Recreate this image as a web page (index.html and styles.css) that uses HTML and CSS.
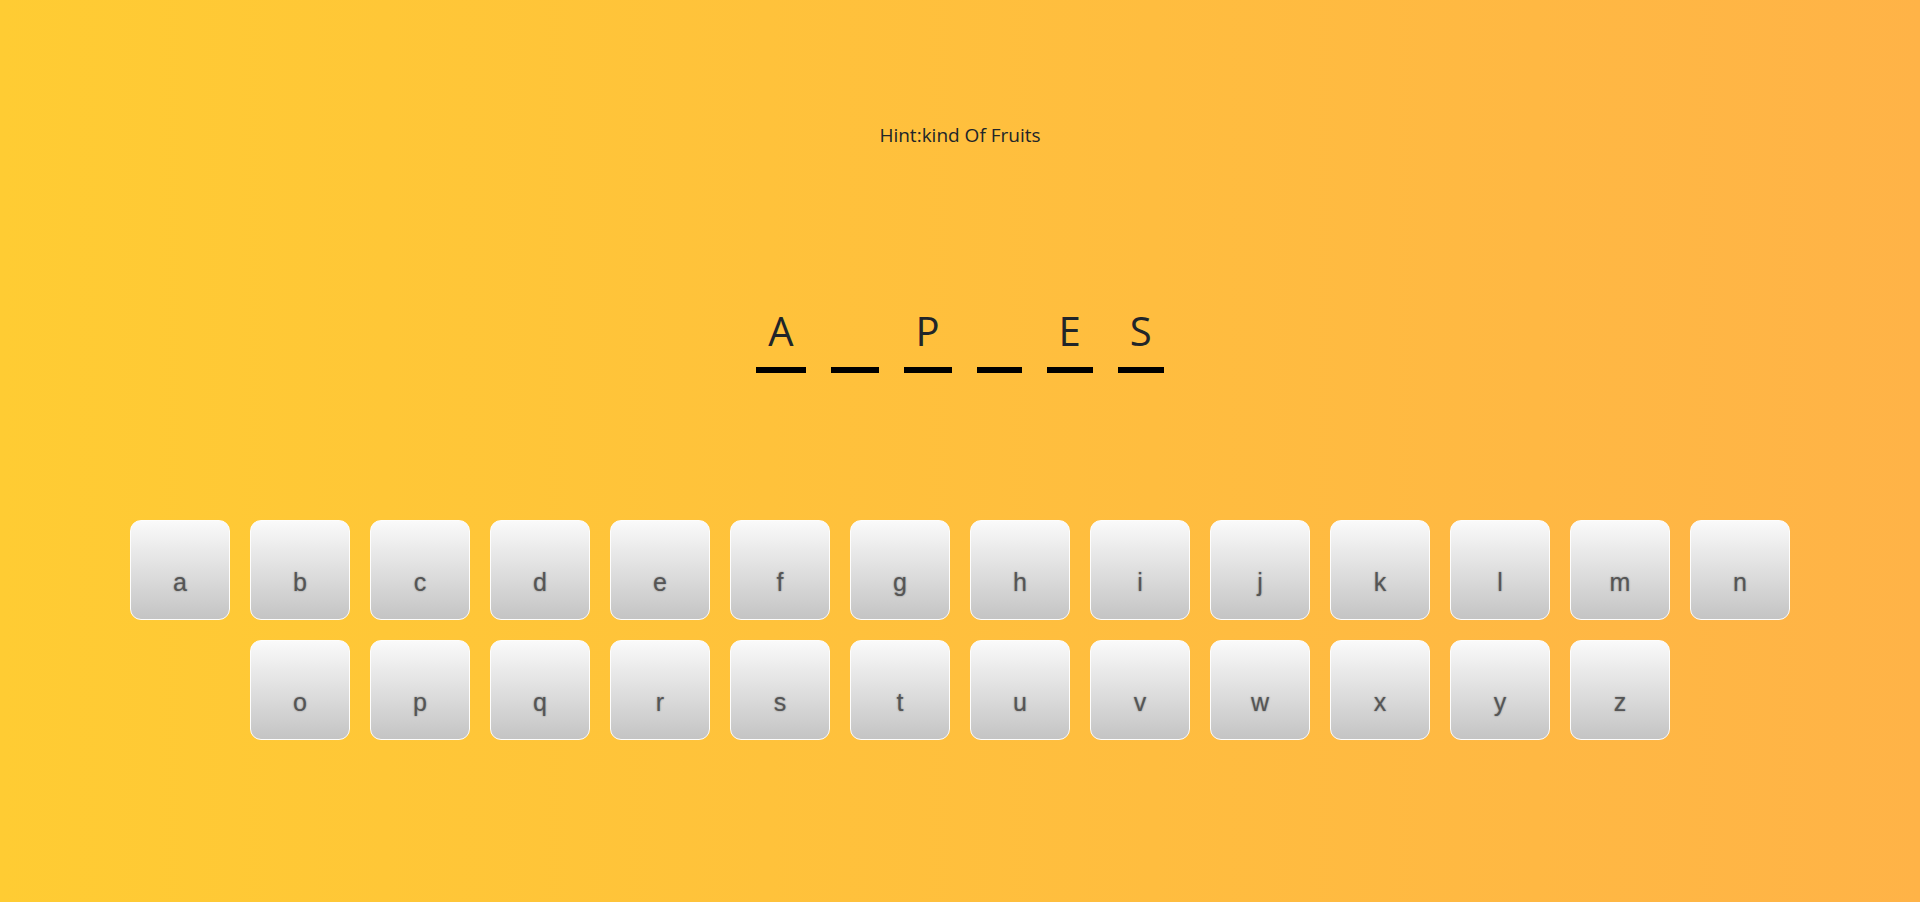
FILE: index.html
```html
<!DOCTYPE html>
<html lang="en">
<head>
<meta charset="utf-8">
<title>Hangman</title>
<link rel="stylesheet" href="styles.css">
</head>
<body>
<main class="game">
  <p class="hint">Hint:kind Of Fruits</p>
  <div class="word">
    <span class="slot">A</span>
    <span class="slot blank">P</span>
    <span class="slot">P</span>
    <span class="slot blank">L</span>
    <span class="slot">E</span>
    <span class="slot">S</span>
  </div>
  <div class="keyboard">
    <button class="key">a</button>
    <button class="key">b</button>
    <button class="key">c</button>
    <button class="key">d</button>
    <button class="key">e</button>
    <button class="key">f</button>
    <button class="key">g</button>
    <button class="key">h</button>
    <button class="key">i</button>
    <button class="key">j</button>
    <button class="key">k</button>
    <button class="key">l</button>
    <button class="key">m</button>
    <button class="key">n</button>
    <button class="key">o</button>
    <button class="key">p</button>
    <button class="key">q</button>
    <button class="key">r</button>
    <button class="key">s</button>
    <button class="key">t</button>
    <button class="key">u</button>
    <button class="key">v</button>
    <button class="key">w</button>
    <button class="key">x</button>
    <button class="key">y</button>
    <button class="key">z</button>
  </div>
</main>
</body>
</html>
```
FILE: styles.css
```css
html, body {
  margin: 0;
  padding: 0;
  height: 100%;
}

body {
  min-height: 100vh;
  background: linear-gradient(to right, #ffcc33, #ffb347);
  font-family: "Open Sans", "Noto Sans", sans-serif;
  color: #212529;
  overflow: hidden;
}

.game {
  display: flex;
  flex-direction: column;
  align-items: center;
  padding-top: 121px;
}

.hint {
  margin: 0;
  font-size: 19px;
  line-height: 28px;
}

.word {
  display: flex;
  gap: 25px;
  margin-top: 152px;
}

.slot {
  display: inline-block;
  font-size: 40px;
  line-height: 60px;
  padding: 0 12px 6px;
  border-bottom: 6px solid #000;
}

.slot.blank {
  color: transparent;
}

.keyboard {
  display: flex;
  flex-wrap: wrap;
  justify-content: center;
  width: 1680px;
  margin-top: 137px;
}

.key {
  box-sizing: border-box;
  width: 100px;
  height: 100px;
  margin: 10px;
  padding: 24px 0 0;
  display: flex;
  align-items: center;
  justify-content: center;
  border: 1px solid #fdfdfd;
  border-radius: 11px;
  background: linear-gradient(to bottom, #fafafa, #c4c4c4);
  font-family: "Liberation Sans", Arial, sans-serif;
  font-size: 25px;
  color: #555;
  text-shadow: 0 0 2px rgba(0, 0, 0, 0.4);
  cursor: pointer;
}
```
